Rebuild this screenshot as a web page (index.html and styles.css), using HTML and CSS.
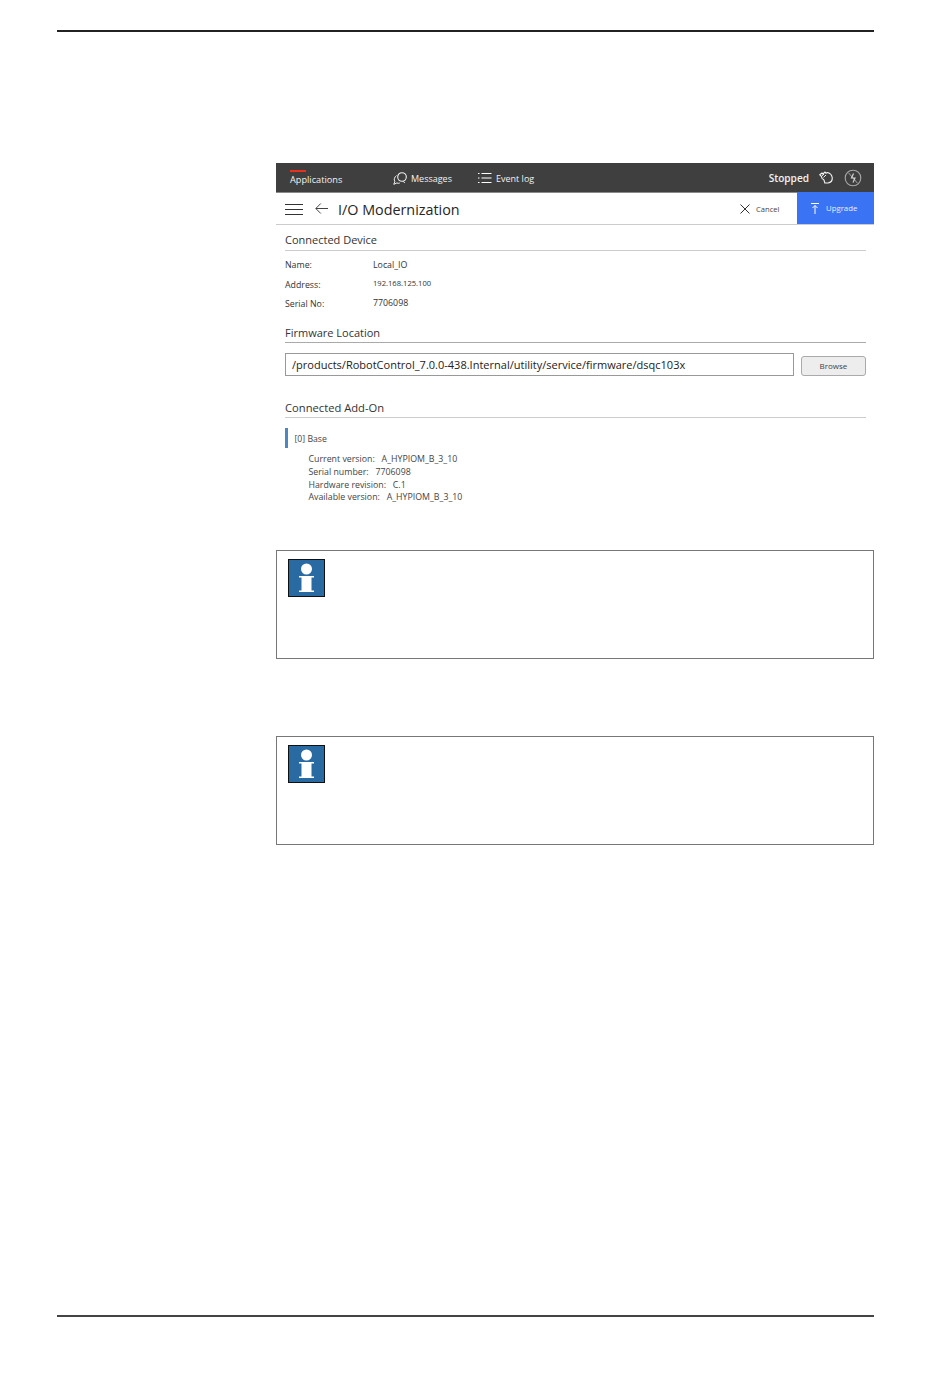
FILE: index.html
```html
<!DOCTYPE html>
<html lang="en">
<head>
<meta charset="utf-8">
<title>I/O Modernization</title>
<link rel="stylesheet" href="styles.css">
</head>
<body>
<div class="page">
  <div class="rule"></div>
  <div class="content">
    <section class="app">
      <div class="topbar">
        <div class="tab tab-apps"><span class="tab-mark"></span>Applications</div>
        <div class="tab tab-msg">
          <svg viewBox="0 0 14 13" width="14" height="13"><circle cx="9" cy="5" r="4.300" fill="none" stroke="#f2f2f2" stroke-width="1.100"/><path d="M10 9.200l1.800 1.800" stroke="#f2f2f2" stroke-width="1"/><path d="M3.500 3.500C1.500 5 .6 7.500 1.800 9.500L.8 12.300l3-1.300c1 .4 2 .4 3 0" fill="none" stroke="#f2f2f2" stroke-width="1"/></svg>
          Messages
        </div>
        <div class="tab tab-log">
          <svg viewBox="0 0 14 12" width="14" height="12"><path d="M3.500 1.500h10M3.500 6h10M3.500 10.500h10" stroke="#fff" stroke-width="1.100"/><path d="M0 1.500h1.500M0 6h1.500M0 10.500h1.500" stroke="#fff" stroke-width="1.100"/></svg>
          Event log
        </div>
        <div class="status">
          <span class="status-text">Stopped</span>
          <svg viewBox="0 0 14 13" width="14" height="13"><path d="M.8 3.800 3 2 4 3 6 1 7 2.200 8.500 1.500c2 .5 4.300 2.300 4.700 5 .3 2.700-1.500 5-4.200 5.500H5.800L5 9 3 7.300 2.300 5.300z" fill="none" stroke="#f4f4f4" stroke-width="1.100"/><path d="M2.800 5 5 3M4.500 6.300 7 4" stroke="#f4f4f4" stroke-width="1"/></svg>
          <svg viewBox="0 0 18 18" width="18" height="18"><circle cx="9" cy="9" r="7.800" fill="none" stroke="#a8a8a8" stroke-width="1.100"/><path d="M4.500 3.800 13.500 14.200" stroke="#a8a8a8" stroke-width="1"/><path d="M9.500 4.500 7.500 9h3.500l-2 4.500" fill="none" stroke="#d0d0d0" stroke-width="1.200"/></svg>
        </div>
      </div>
      <div class="titlebar">
        <svg class="ico-menu" viewBox="0 0 18 11" width="18" height="11"><path d="M0 .5h18M0 5.500h18M0 10.500h18" stroke="#333" stroke-width="1"/></svg>
        <svg class="ico-back" viewBox="0 0 13 11" width="13" height="11"><path d="M13 5.500H1M5.800.5l-5 5 5 5" fill="none" stroke="#444" stroke-width="1"/></svg>
        <h1 class="title">I/O Modernization</h1>
        <div class="cancel">
          <svg viewBox="0 0 10 10" width="10" height="10"><path d="M.5.500l9 9M9.500.500l-9 9" stroke="#333" stroke-width="1"/></svg>
          <span>Cancel</span>
        </div>
        <div class="upgrade">
          <svg viewBox="0 0 8 11" width="8" height="11"><path d="M0 .5h8M4 11V2.500M1.500 5 4 2.500 6.500 5" fill="none" stroke="#fff" stroke-width="1"/></svg>
          <span>Upgrade</span>
        </div>
      </div>
      <div class="body">
        <h2 class="heading heading-device">Connected Device</h2>
        <dl class="device">
          <dt class="row-1">Name:</dt><dd class="row-1">Local_IO</dd>
          <dt class="row-2">Address:</dt><dd class="row-2 small">192.168.125.100</dd>
          <dt class="row-3">Serial No:</dt><dd class="row-3">7706098</dd>
        </dl>
        <h2 class="heading heading-firmware">Firmware Location</h2>
        <div class="location">
          <div class="path">/products/RobotControl_7.0.0-438.Internal/utility/service/firmware/dsqc103x</div>
          <div class="browse">Browse</div>
        </div>
        <h2 class="heading heading-addon">Connected Add-On</h2>
        <div class="addon"><span>[0] Base</span></div>
        <ul class="details">
          <li>Current version:&nbsp;&nbsp; A_HYPIOM_B_3_10</li>
          <li>Serial number:&nbsp;&nbsp; 7706098</li>
          <li>Hardware revision:&nbsp;&nbsp; C.1</li>
          <li>Available version:&nbsp;&nbsp; A_HYPIOM_B_3_10</li>
        </ul>
      </div>
    </section>
    <aside class="note note-first">
      <svg class="info" viewBox="0 0 37 38" width="37" height="38"><rect x=".5" y=".5" width="36" height="37" fill="#2a6aa3" stroke="#111"/><circle cx="18.500" cy="10" r="5.500" fill="#fff"/><path d="M11 17h15v1.500h-2.500v13H26V33H11v-1.500h2.500v-13H11z" fill="#fff"/></svg>
    </aside>
    <aside class="note note-second">
      <svg class="info" viewBox="0 0 37 38" width="37" height="38"><rect x=".5" y=".5" width="36" height="37" fill="#2a6aa3" stroke="#111"/><circle cx="18.500" cy="10" r="5.500" fill="#fff"/><path d="M11 17h15v1.500h-2.500v13H26V33H11v-1.500h2.500v-13H11z" fill="#fff"/></svg>
    </aside>
  </div>
  <div class="rule rule-bottom"></div>
</div>
</body>
</html>
```
FILE: styles.css
```css
* { box-sizing: border-box; }
html, body { margin: 0; padding: 0; background: #fff; }
body { font-family: "Open Sans", "Noto Sans", sans-serif; color: #333; }
.page { width: 950px; height: 1378px; padding: 30px 76px 0 57px; display: flex; flex-direction: column; }
.rule { height: 2px; background: #222; flex: none; }
.rule-bottom { margin-top: auto; margin-bottom: 61px; height: 2px; background: #444; }
.content { margin-left: 219px; padding-top: 131px; display: flex; flex-direction: column; }

.app { height: 347px; display: flex; flex-direction: column; }
.topbar { height: 30px; background: #3f3f3f; border-bottom: 1px solid #8a8a8a; display: flex; align-items: center; color: #f2f2f2; font-size: 9px; flex: none; }
.tab { display: flex; align-items: center; gap: 3px; padding-top: 1px; }
.tab-apps { position: relative; margin-left: 14px; width: 103px; padding-top: 3px; font-size: 9.200px; }
.tab-mark { position: absolute; left: 0; top: 0; width: 16px; height: 2px; background: #e8301c; }
.tab-msg { width: 85px; gap: 4px; }
.tab-log { gap: 4px; }
.status { margin-left: auto; display: flex; align-items: center; gap: 11px; margin-right: 12px; }
.status-text { font-size: 10.100px; font-weight: 600; margin-right: -1px; }
.titlebar { height: 32px; display: flex; align-items: center; border-bottom: 1px solid #ccc; flex: none; }
.ico-menu { margin: 2px 0 0 9px; }
.ico-back { margin-left: 12px; }
.title { margin: 1px 0 0 10px; font-size: 14.350px; font-weight: 500; color: #262626; flex: 1; }
.cancel { display: flex; align-items: center; gap: 6px; font-size: 7.600px; width: 57px; color: #444; }
.upgrade { width: 77px; height: 32px; align-self: flex-start; margin-top: -1px; background: #3b73f5; color: #e8efff; display: flex; align-items: center; gap: 7px; padding-left: 14px; font-size: 7.800px; }

.body { padding: 0 8px 0 9px; }
.heading { margin: 0; font-size: 11px; font-weight: 400; color: #333; height: 18px; line-height: 16px; border-bottom: 1px solid #ccc; }
.heading-device { margin-top: 7px; height: 19px; line-height: 15px; }
.heading-firmware { margin-top: 15px; border-bottom-color: #aaa; }
.heading-addon { margin-top: 24px; font-size: 11.200px; }

.device { margin: 0; display: grid; grid-template-columns: 88px 1fr; align-content: start; font-size: 8.800px; height: 59px; }
.device dt, .device dd { margin: 0; line-height: 12px; }
.device dt.row-1, .device dd.row-1 { margin-top: 8px; }
.device dt.row-2 { margin-top: 7.500px; }
.device dd.row-2 { margin-top: 6px; }
.device dt.row-3 { margin-top: 7.500px; }
.device dd.row-3 { margin-top: 6.500px; }
.small { font-size: 7.600px; }

.location { display: flex; align-items: center; gap: 7px; margin-top: 10px; }
.path { flex: 1; height: 23px; border: 1px solid #999; padding-left: 6px; line-height: 21px; font-size: 11.030px; color: #222; white-space: nowrap; }
.browse { width: 65px; height: 20px; margin-top: 3px; border: 1px solid #aaa; border-radius: 3px; background: #ededed; font-size: 8px; text-align: center; line-height: 18px; color: #444; }

.addon { margin-top: 10px; height: 20px; border-left: 3px solid #4f86bd; padding: 1px 0 0 6.500px; font-size: 8.700px; line-height: 20px; color: #444; }
.details { list-style: none; margin: 5px 0 0; padding: 0 0 0 23.500px; font-size: 8.800px; line-height: 12.800px; color: #444; }

.note { height: 109px; border: 1px solid #777; padding: 8px 11px; flex: none; }
.note-first { margin-top: 40px; }
.note-second { margin-top: 77px; }
.info { display: block; }
```
